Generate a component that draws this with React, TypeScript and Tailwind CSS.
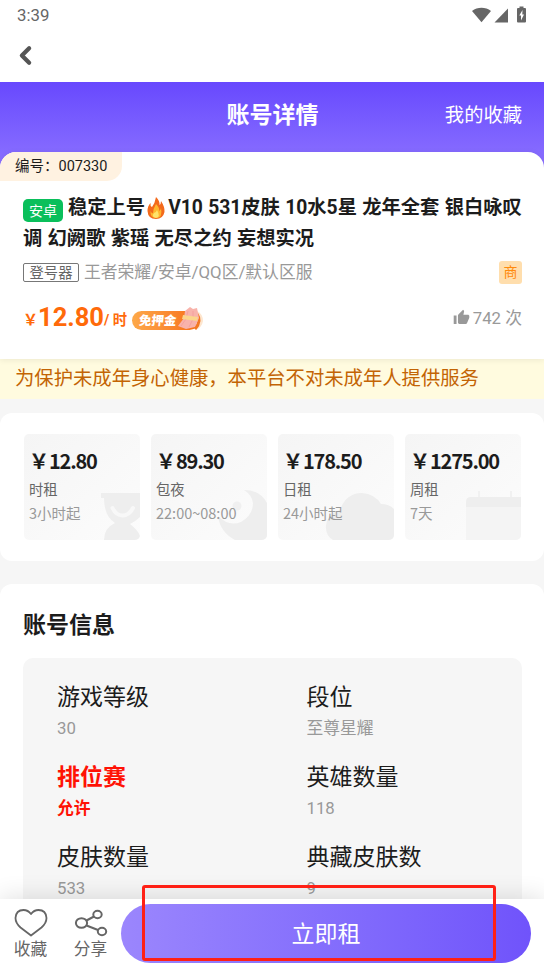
import { ChevronLeft } from 'lucide-react';
import { MdThumbUp } from 'react-icons/md';

const prices = [
  { price: '12.80', name: '时租', desc: '3小时起', icon: 'hourglass' },
  { price: '89.30', name: '包夜', desc: '22:00~08:00', icon: 'moon' },
  { price: '178.50', name: '日租', desc: '24小时起', icon: 'cloud' },
  { price: '1275.00', name: '周租', desc: '7天', icon: 'calendar' },
];

const infos = [
  { label: '游戏等级', value: '30' },
  { label: '段位', value: '至尊星耀' },
  { label: '排位赛', value: '允许', hot: true },
  { label: '英雄数量', value: '118' },
  { label: '皮肤数量', value: '533' },
  { label: '典藏皮肤数', value: '9' },
];

const StatusBar = () => (
  <div className='flex h-[30px] items-center justify-between pl-[17px] pr-[16px] text-[#666]'>
    <span className='text-[16.8px] leading-[29px]'>3:39</span>
    <svg className='-mt-px' width='56' height='18' viewBox='0 0 56 18' fill='#666'>
      <path d='M0 5C5.500 .8 13.500 .8 19 5L9.500 16.200Z' />
      <path d='M36 2.500V16.500H22.500Z' />
      <path d='M47.500 .5h4v1.600h1.500q1 0 1 1V15.500q0 1-1 1h-7q-1 0-1-1V3.100q0-1 1-1h1.500Z' />
      <path d='M50.500 4L47.300 9.500h1.700v5l3-6h-1.700Z' fill='#fff' />
    </svg>
  </div>
);

const CardArt = ({ icon }: { icon: string }) => (
  <svg className='absolute inset-0' width='116' height='106' viewBox='0 0 116 106'>
    {icon === 'hourglass' && (
      <>
        <path d='M77 59H116V83Q112 87 106 90Q114 96 116 102V106H80Q80 94 91 89Q80 82 80 64H77Z' fill='#eee' />
        <path d='M88.500 74Q92 81.500 98.500 81.500Q105 81.500 109 74' fill='none' stroke='#f8f8f8' strokeWidth='4' strokeLinecap='round' />
      </>
    )}
    {icon === 'moon' && (
      <>
        <path d='M93 56Q109 56 116 69V106H84Q69 98 67 82Q78 93 90 88Q102 81 102 69Q101 61 93 56Z' fill='#eee' />
        <circle cx='86' cy='72' r='4.500' fill='#f0f0f0' />
      </>
    )}
    {icon === 'cloud' && (
      <path d='M55 106Q47 101 48 91Q50 79 62 76Q68 59 84 59Q97 60 103 70Q111 70 116 75V106Z' fill='#eee' />
    )}
    {icon === 'calendar' && (
      <>
        <path d='M61 73H116V106H61Z' fill='#f4f4f4' />
        <path d='M61 73V68Q61 63 66 63H116V73Z' fill='#eee' />
        <path d='M73 57h2v6h-2zM105 57h2v6h-2z' fill='#f1f1f1' />
      </>
    )}
  </svg>
);

const FreeDeposit = () => (
  <div className='relative ml-[5px] mt-[3px] h-[19px] w-[67px] rounded-full bg-linear-to-r from-[#fda849] to-[#f66f14]'>
    <span className='absolute left-[7px] top-0 -skew-x-6 text-[12.5px] font-black leading-[19px] text-white'>免押金</span>
    <svg className='absolute -top-[5px] left-[45px]' width='27' height='25' viewBox='0 0 27 25'>
      <path d='M20 5Q26 8 26 15Q25 22 18 24' fill='#fde6cf' />
      <path d='M20 8Q25 15 18 23' fill='none' stroke='#f27824' strokeWidth='3' />
      <path d='M8 5L13 1L16 3L20 2L22 12L18 21L9 23L1 20L7 12Z' fill='#f8b3ab' />
      <path d='M11 5L9 13L4 20M16 5L16 13L12 21' stroke='#f39a98' strokeWidth='.7' fill='none' />
      <path d='M6 9L21 11L20 15L5 13Z' fill='#fbd58c' />
    </svg>
  </div>
);

export default function App() {
  return (
    <div className="relative flex h-[968px] w-[544px] flex-col overflow-hidden bg-[#f6f6f6] font-['Roboto','Noto_Sans_CJK_SC',sans-serif] text-[#1c1c1c]">
      <header className='h-[82px] shrink-0 bg-white'>
        <StatusBar />
        <ChevronLeft className='ml-[11px] mt-[11px] h-[29px] w-[29px] text-[#555]' strokeWidth={3.5} />
      </header>

      <section className='h-[277px] shrink-0 bg-linear-to-b from-[#6848fe] from-0% to-[#8a6eff] to-[80px]'>
        <div className='grid h-[70px] grid-cols-3 items-center text-white'>
          <span />
          <h1 className='-mt-[2px] pl-px text-center text-[23px] font-bold'>账号详情</h1>
          <span className='-mt-[2px] pr-[22px] text-right text-[19.3px]'>我的收藏</span>
        </div>
        <div className='relative z-10 h-[207px] overflow-hidden rounded-t-[16px] bg-white shadow-[0_1px_6px_rgba(0,0,0,0.08)]'>
          <div className='h-[29px] w-[122px] rounded-br-[15px] bg-[#fff2e1] pl-[15px] text-[14.5px] leading-[30px]'>编号：007330</div>
          <div className='pl-[23px] pr-[22px]'>
            <h2 className='mt-[11px] whitespace-nowrap text-[19.3px] font-bold leading-[31px] [word-spacing:0.5px]'>
              <span className='flex h-[31px] items-center'>
                <span className='mr-[5px] mt-[5px] h-[23px] w-[40px] rounded-[5px] bg-[#0abf5b] text-center text-[14px] font-normal leading-[24px] text-white'>安卓</span>
                稳定上号
                <svg className='ml-[2px] mr-[3px] mt-px' width='18' height='22' viewBox='0 0 18 22'>
                  <path d='M9 0Q13 4 12.500 8Q14 7 14 4Q18 10 17.500 15Q16 22 9 22Q1 22 .5 14Q.5 9 3.500 6Q3 9 5 10Q8 6 9 0Z' fill='#f36a1c' />
                  <path d='M9 7Q13 11 12 14Q14 13 14 11Q16 21 9 21Q3 21 3.500 14Q5 17 6 16Q6 12 9 7Z' fill='#ffb62e' />
                  <path d='M10 13Q14 20 9 21Q4 20 7 16Q9 16 10 13Z' fill='#ffe36b' />
                </svg>
                V10 531皮肤 10水5星 龙年全套 银白咏叹
              </span>
              <span className='block h-[31px]'>调 幻阙歌 紫瑶 无尽之约 妄想实况</span>
            </h2>
            <div className='mt-[6px] flex h-[24px] items-center'>
              <span className='h-[19px] w-[56px] rounded-[2px] border border-[#777] text-center text-[14.3px] leading-[18px] text-[#666]'>登号器</span>
              <span className='ml-[5px] text-[16.8px] leading-6 text-[#999]'>王者荣耀/安卓/QQ区/默认区服</span>
              <span className='ml-auto h-[23px] w-[23px] rounded-[3px] bg-[#ffdead] text-center text-[14px] leading-[23px] text-[#ff8a0c]'>商</span>
            </div>
            <div className='mt-[18px] flex h-[34px] items-center text-[#ff6a0a]'>
              <span className='mt-[2px] text-[15px] font-bold'>￥</span>
              <span className='-mt-[3px] text-[25.5px] font-bold'>12.80</span>
              <span className='mt-[3px] text-[14.3px] font-bold'>/ 时</span>
              <FreeDeposit />
              <div className='ml-auto flex items-center text-[16.8px] text-[#999]'>
                <MdThumbUp className='-mt-[3px] mr-[3px] h-[17px] w-[17px]' />
                742 次
              </div>
            </div>
          </div>
        </div>
      </section>

      <div className='h-[40px] shrink-0 bg-[#fffbdf] pl-[15px] text-[19.33px] leading-[40px] text-[#c36404]'>
        为保护未成年身心健康，本平台不对未成年人提供服务
      </div>

      <section className='mt-[14px] flex h-[148px] shrink-0 gap-[11px] rounded-[12px] bg-white pl-[24px] pr-[23px] pt-[21px]'>
        {prices.map((item) => (
          <div key={item.name} className="relative h-[106px] w-[116px] overflow-hidden rounded-[5px] bg-linear-to-br from-[#f5f5f5] to-[#fcfcfc] pl-[5px] pt-[14px] font-['Noto_Sans_CJK_SC',sans-serif]">
            <CardArt icon={item.icon} />
            <div className='relative whitespace-nowrap text-[20px] font-bold leading-[26px]'>￥<span className='tracking-[-1.2px]'>{item.price}</span></div>
            <div className='relative text-[14.3px] leading-[29px] text-[#666]'>{item.name}</div>
            <div className='relative text-[14.5px] leading-[20px] text-[#999]'>{item.desc}</div>
          </div>
        ))}
      </section>

      <section className='mt-[23px] h-[400px] shrink-0 rounded-t-[12px] bg-white pl-[23px] pr-[22px] pt-[24px]'>
        <h2 className='text-[23px] font-bold leading-[35px]'>账号信息</h2>
        <div className='mt-[15px] grid h-[330px] auto-rows-[80px] grid-cols-2 rounded-[10px] bg-[#f6f6f6] pl-[34px] pt-[23px]'>
          {infos.map((item) => (
            <div key={item.label} className={item.hot ? 'text-[#ff1205]' : 'odd:pl-0 even:pl-[17px]'}>
              <div className={item.hot ? 'text-[23px] font-bold leading-[34px]' : 'text-[23px] leading-[34px]'}>{item.label}</div>
              <div className={item.hot ? 'text-[16.8px] font-bold leading-[27px]' : 'text-[16.8px] leading-[27px] text-[#999]'}>{item.value}</div>
            </div>
          ))}
        </div>
      </section>

      <footer className='absolute bottom-0 left-0 flex h-[69px] w-full bg-white text-[16.7px] text-[#666] shadow-[0_-2px_24px_rgba(0,0,0,0.12)]'>
        <div className='flex w-[61px] flex-col items-center pt-[9px]'>
          <svg width='34' height='30' viewBox='0 0 34 30' fill='none' stroke='#666' strokeWidth='1.800' strokeLinejoin='round'>
            <path d='M17 27.500L6.500 19.500Q1.500 15 1.500 10Q2 2 9.500 2Q14 2 17 6Q20 2 24.500 2Q32 2 32.500 10Q32.500 15 27.500 19.500Z' />
          </svg>
          <span className='pt-px leading-[22px]'>收藏</span>
        </div>
        <div className='flex w-[59px] flex-col items-center pt-[9px]'>
          <svg width='34' height='30' viewBox='0 0 34 30' fill='none' stroke='#666' strokeWidth='2'>
            <ellipse cx='7.500' cy='15' rx='5.600' ry='4.800' />
            <ellipse cx='23.500' cy='6.500' rx='4.200' ry='3.700' />
            <ellipse cx='28' cy='23.500' rx='4.200' ry='3.700' />
            <path d='M12.500 12.500L20 8.500M12.500 17.500L24 22' />
          </svg>
          <span className='pt-px leading-[22px]'>分享</span>
        </div>
        <button className='ml-px mt-[5px] h-[59px] w-[410px] rounded-full bg-linear-to-r from-[#9b86fd] to-[#7053fb] pt-[3px] text-[23px] text-white'>立即租</button>
      </footer>

      <div className='absolute left-[142px] top-[885px] h-[76px] w-[354px] rounded-[3px] border-[3px] border-[#ff2015]' />
    </div>
  );
}
